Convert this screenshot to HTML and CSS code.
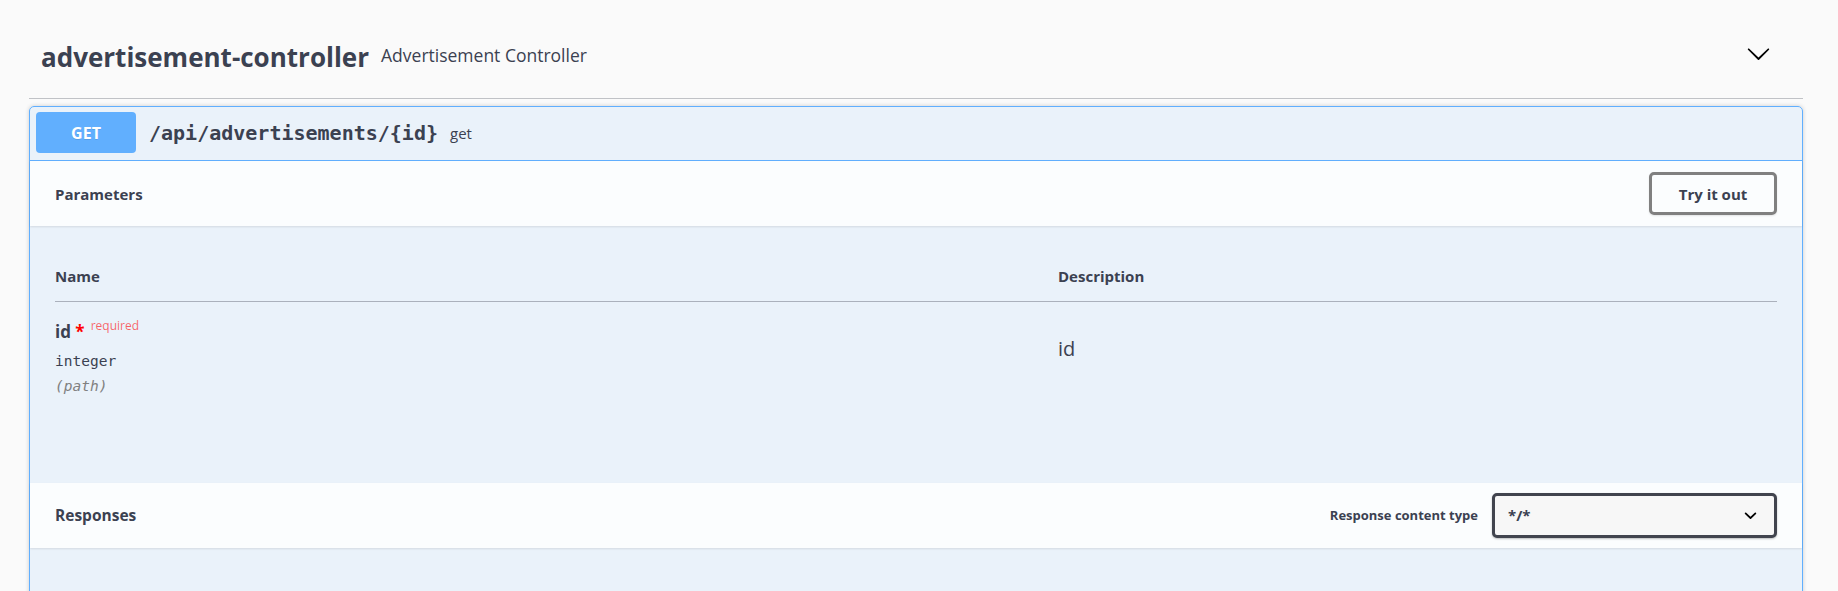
FILE: index.html
```html
<!DOCTYPE html>
<html lang="en">
<head>
<meta charset="utf-8">
<title>Swagger UI</title>
<link rel="stylesheet" href="styles.css">
</head>
<body>
<div class="page">
  <h3 class="tag">
    <span class="tag-name">advertisement-controller</span>
    <small class="tag-desc">Advertisement Controller</small>
    <svg class="tag-arrow" viewBox="0 0 20 20" width="25" height="25" aria-hidden="true"><path d="M17.418 6.109c.272-.268.709-.268.979 0s.271.701 0 .969l-7.908 7.83c-.27.268-.707.268-.979 0l-7.908-7.83c-.27-.268-.27-.701 0-.969.271-.268.709-.268.979 0L10 13.25l7.418-7.141z"/></svg>
  </h3>
  <div class="opblock">
    <div class="summary">
      <span class="method">GET</span>
      <span class="path">/api/advertisements/{id}</span>
      <span class="summary-desc">get</span>
    </div>
    <div class="section-header">
      <h4 class="section-title">Parameters</h4>
      <button class="try-out" type="button">Try it out</button>
    </div>
    <div class="table-container">
      <table class="parameters">
        <thead>
          <tr><th class="col-name">Name</th><th class="col-desc">Description</th></tr>
        </thead>
        <tbody>
          <tr>
            <td class="col-name">
              <div class="param-name">id<span class="star">&nbsp;*</span><span class="required">required</span></div>
              <div class="param-type">integer</div>
              <div class="param-in">(path)</div>
            </td>
            <td class="col-desc"><p class="markdown">id</p></td>
          </tr>
        </tbody>
      </table>
    </div>
    <div class="section-header">
      <h4 class="section-title responses-title">Responses</h4>
      <div class="ct-label">
        <span class="ct-text">Response content type</span>
        <div class="select">
          <span>*/*</span>
          <svg class="select-arrow" viewBox="0 0 20 20" width="25" height="25" aria-hidden="true"><path d="M13.418 7.859a.695.695 0 01.978 0 .68.68 0 010 .969l-3.908 3.830a.697.697 0 01-.979 0l-3.908-3.830a.68.68 0 010-.969.695.695 0 01.978 0L10 11l3.418-3.141z"/></svg>
        </div>
      </div>
    </div>
    <div class="responses-body"></div>
  </div>
</div>
</body>
</html>
```

FILE: styles.css
```css
html, body {
  margin: 0;
  height: 591px;
  overflow: hidden;
  background: #fafafa;
}
body {
  font-family: "Open Sans", sans-serif;
  color: #3b4151;
}
.page {
  padding: 0 35px 0 29px;
}
.tag {
  display: flex;
  align-items: center;
  height: 99px;
  box-sizing: border-box;
  margin: 0;
  padding: 8px 32px 0 12px;
  border-bottom: 1px solid rgba(59, 65, 81, .3);
  font-weight: 400;
}
.tag-name {
  font-size: 26px;
  font-weight: 700;
  line-height: 1;
  padding-top: 8px;
}
.tag-desc {
  flex: 1;
  font-size: 17.5px;
  padding: 4px 12px 0;
}
.tag-arrow {
  flex: none;
  fill: #000;
}
.opblock {
  margin-top: 7px;
  border: 1px solid #61affe;
  border-radius: 5px;
  background: rgba(97, 175, 254, .1);
  box-shadow: 0 0 4px rgba(0, 0, 0, .19);
}
.summary {
  display: flex;
  align-items: center;
  padding: 5px 6px 7px;
  border-bottom: 1px solid #61affe;
}
.method {
  flex: none;
  width: 100px;
  height: 41px;
  display: flex;
  align-items: center;
  justify-content: center;
  background: #61affe;
  color: #fff;
  border-radius: 4px;
  font-size: 16px;
  font-weight: 700;
  text-shadow: 0 1px 0 rgba(0, 0, 0, .1);
}
.path {
  font-family: "DejaVu Sans Mono", monospace;
  font-weight: 700;
  font-size: 20px;
  padding: 0 12px 0 13px;
}
.summary-desc {
  font-size: 15px;
}
.section-header {
  display: flex;
  align-items: center;
  box-sizing: border-box;
  min-height: 65px;
  padding: 10px 25px;
  background: rgba(255, 255, 255, .8);
  box-shadow: 0 1px 2px rgba(0, 0, 0, .1);
}
.section-title {
  flex: 1;
  margin: 0;
  font-size: 15px;
  font-weight: 700;
}
.responses-title {
  font-size: 15.5px;
}
.try-out {
  font-family: inherit;
  color: #3b4151;
  font-size: 15px;
  font-weight: 700;
  width: 128px;
  height: 43px;
  padding: 0;
  border: 3px solid #808080;
  border-radius: 5px;
  background: transparent;
  box-shadow: 0 1px 2px rgba(0, 0, 0, .1);
}
.table-container {
  padding: 25px;
}
.parameters {
  width: 100%;
  border-collapse: collapse;
  table-layout: fixed;
}
.parameters th {
  text-align: left;
  font-size: 15px;
  font-weight: 700;
  line-height: 20px;
  padding: 15px 0;
  border-bottom: 1px solid rgba(59, 65, 81, .2);
}
.parameters th.col-name {
  width: 1003px;
}
.parameters tbody tr {
  height: 156px;
}
.parameters td {
  vertical-align: top;
  padding: 10px 0 0;
}
.parameters td.col-desc {
  padding-top: 0;
}
.param-name {
  font-size: 17px;
  font-weight: 700;
  line-height: 27px;
}
.star {
  color: red;
}
.required {
  font-size: 12px;
  font-weight: 400;
  color: rgba(255, 0, 0, .6);
  padding-left: 6px;
  vertical-align: 8px;
}
.param-type {
  font-family: "DejaVu Sans Mono", monospace;
  font-weight: 400;
  font-size: 14.5px;
  padding: 8px 0 7px;
}
.param-in {
  font-family: "DejaVu Sans Mono", monospace;
  font-style: italic;
  font-size: 14.5px;
  line-height: 20px;
  color: #808080;
}
.markdown {
  margin: 33px 0 0;
  font-size: 20px;
}
.ct-label {
  display: flex;
  align-items: center;
  font-size: 13px;
  font-weight: 700;
}
.ct-text {
  padding-right: 14px;
}
.select {
  box-sizing: border-box;
  width: 285px;
  height: 45px;
  display: flex;
  align-items: center;
  justify-content: space-between;
  padding: 0 11px 0 13px;
  border: 3px solid #41444e;
  border-radius: 5px;
  background: #f7f7f7;
  box-shadow: 0 1px 2px rgba(0, 0, 0, .25);
  font-size: 15px;
  font-weight: 700;
}
.select-arrow {
  flex: none;
}
.responses-body {
  height: 80px;
}
```
